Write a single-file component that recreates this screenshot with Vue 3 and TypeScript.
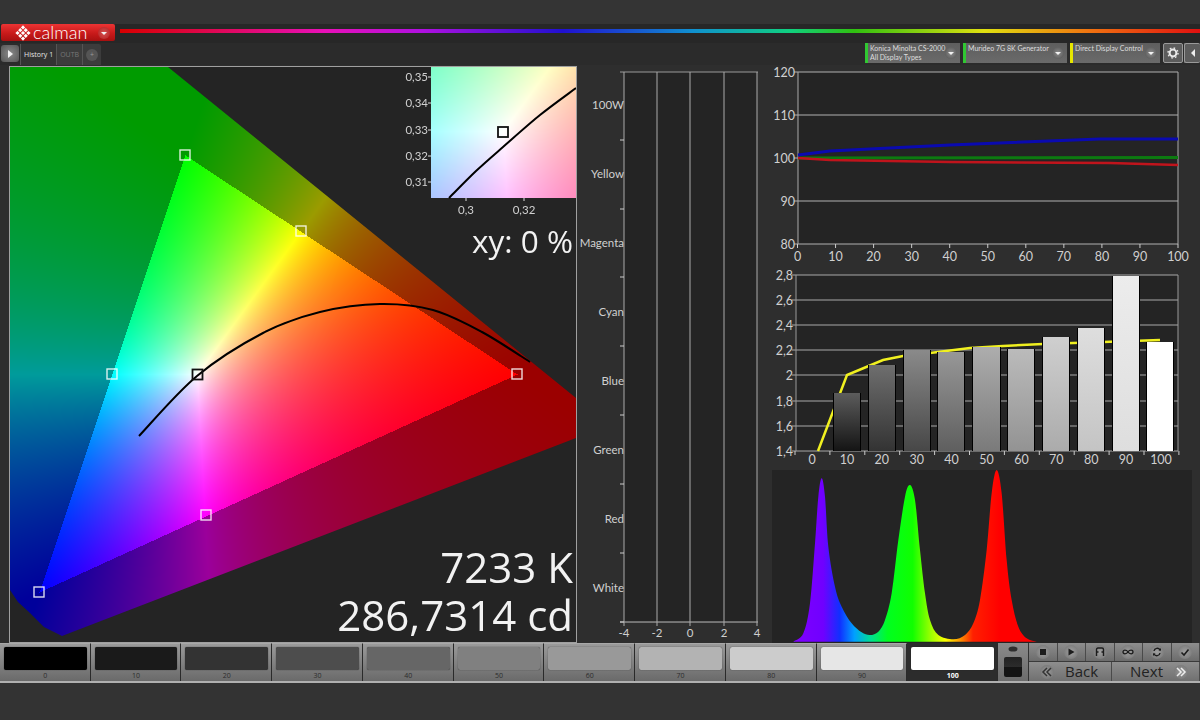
<script setup lang="ts">
import { onMounted, ref } from 'vue'

type Pt = [number, number]

const cieCanvas = ref<HTMLCanvasElement | null>(null)
const insetCanvas = ref<HTMLCanvasElement | null>(null)

// chromaticity triangle, page coordinates
const G: Pt = [185, 155]
const R: Pt = [517, 374]
const B: Pt = [39, 592]
const W: Pt = [197, 374]
const locus: Pt[] = [
  [10, 67], [168, 67], [576, 398], [576, 438], [62, 636], [44, 627], [30, 613], [18, 602], [10, 590],
]

function smooth(pts: Pt[]): string {
  let d = `M${pts[0][0]},${pts[0][1]}`
  for (let i = 0; i < pts.length - 1; i++) {
    const p0 = pts[Math.max(i - 1, 0)]
    const p1 = pts[i]
    const p2 = pts[i + 1]
    const p3 = pts[Math.min(i + 2, pts.length - 1)]
    const c1x = p1[0] + (p2[0] - p0[0]) / 6
    const c1y = p1[1] + (p2[1] - p0[1]) / 6
    const c2x = p2[0] - (p3[0] - p1[0]) / 6
    const c2y = p2[1] - (p3[1] - p1[1]) / 6
    d += ` C${c1x.toFixed(1)},${c1y.toFixed(1)} ${c2x.toFixed(1)},${c2y.toFixed(1)} ${p2[0]},${p2[1]}`
  }
  return d
}

const planck = smooth([
  [139, 436], [197, 376], [263, 333], [320, 312], [380, 304], [433, 310], [482, 332], [530, 362],
])
const insetPlanck = smooth([[449, 198], [476, 171], [503, 147], [540, 115], [576, 88]])
const primaries: Pt[] = [G, [301, 231], [112, 374], R, [206, 515], B]

const insetLeft = [
  { t: '0,35', y: 77 }, { t: '0,34', y: 103 }, { t: '0,33', y: 130 }, { t: '0,32', y: 156 }, { t: '0,31', y: 182 },
]
const insetBottom = [{ t: '0,3', x: 466 }, { t: '0,32', x: 524 }]

// delta chart
const deltaRows = [
  { t: '100W', y: 105 }, { t: 'Yellow', y: 174 }, { t: 'Magenta', y: 243 }, { t: 'Cyan', y: 312 },
  { t: 'Blue', y: 381 }, { t: 'Green', y: 450 }, { t: 'Red', y: 519 }, { t: 'White', y: 588 },
]
const deltaTicks = [140, 209, 277, 346, 415, 484, 553, 622]
const deltaCols = [{ t: '-4', x: 624 }, { t: '-2', x: 657 }, { t: '0', x: 690 }, { t: '2', x: 724 }, { t: '4', x: 757 }]

// rgb balance
const rgbGrid = [{ t: '120', y: 72 }, { t: '110', y: 115 }, { t: '100', y: 158 }, { t: '90', y: 201 }, { t: '80', y: 244 }]
const rgbCols = Array.from({ length: 11 }, (_, i) => ({ t: String(i * 10), x: 797.5 + i * 38.05 }))
const rgbBlue = 'M798,155 L830,151 L950,145 L1100,139 L1178,139'
const rgbGreen = 'M798,158 L1178,157.5'
const rgbRed = 'M798,158 L830,160 L950,162 L1110,163 L1178,165'

// gamma
const gammaGrid = [
  { t: '2,8', y: 275 }, { t: '2,6', y: 300 }, { t: '2,4', y: 325 }, { t: '2,2', y: 350 },
  { t: '2', y: 375 }, { t: '1,8', y: 401 }, { t: '1,6', y: 426 }, { t: '1,4', y: 451 },
]
const gammaCols = ['0', '10', '20', '30', '40', '50', '60', '70', '80', '90', '100'].map((t, i) => ({
  t,
  x: 812 + i * 34.9,
}))
const gammaTicks = Array.from({ length: 12 }, (_, i) => 795 + i * 34.9)
const gammaLine: Pt[] = [
  [818, 451], [847, 375], [883, 360], [903, 356], [930, 353], [970, 348], [1003, 346], [1043, 344], [1103, 342], [1160, 340],
]
const gammaPath = gammaLine.map((p, i) => `${i ? 'L' : 'M'}${p[0]},${p[1]}`).join(' ')
const gammaBars = [
  { x: 834, w: 26, top: 393, c1: '#5c5c5c', c2: '#141414' },
  { x: 869, w: 26, top: 365, c1: '#6e6e6e', c2: '#333333' },
  { x: 904, w: 26, top: 350, c1: '#8a8a8a', c2: '#474747' },
  { x: 938, w: 26, top: 352, c1: '#979797', c2: '#5f5f5f' },
  { x: 973, w: 27, top: 347, c1: '#adadad', c2: '#7a7a7a' },
  { x: 1008, w: 26, top: 349, c1: '#bbbbbb', c2: '#939393' },
  { x: 1043, w: 26, top: 337, c1: '#cfcfcf', c2: '#ababab' },
  { x: 1078, w: 26, top: 328, c1: '#dedede', c2: '#c4c4c4' },
  { x: 1113, w: 26, top: 276, c1: '#ececec', c2: '#dedede' },
  { x: 1147, w: 26, top: 342, c1: '#ffffff', c2: '#ffffff' },
]

// spectrum, traced outline
const spectrumRaw: Pt[] = [
  [70, 545], [100, 520], [120, 430], [135, 250], [145, 110], [155, 55], [165, 110], [175, 260], [195, 380], [215, 440],
  [245, 490], [275, 517], [300, 525], [325, 515], [345, 480], [365, 400], [385, 240], [405, 110], [420, 75], [435, 120],
  [450, 270], [465, 400], [480, 480], [505, 525], [550, 538], [585, 525], [610, 490], [630, 420], [650, 270], [665, 100],
  [680, 30], [695, 100], [710, 300], [725, 420], [745, 500], [770, 535], [800, 545],
]
const spectrumPath =
  smooth(spectrumRaw.map((p) => [770 + p[0] / 3, 460 + p[1] / 3] as Pt)) + ' Z'
const spectrumStops = [
  { o: 0, c: '#8000ff' }, { o: 0.15, c: '#7000ff' }, { o: 0.23, c: '#1030ff' }, { o: 0.3, c: '#00a0ff' },
  { o: 0.38, c: '#00e090' }, { o: 0.46, c: '#00ff20' }, { o: 0.58, c: '#10ff00' }, { o: 0.67, c: '#a0ff00' },
  { o: 0.74, c: '#ffff00' }, { o: 0.81, c: '#ff9000' }, { o: 0.87, c: '#ff2000' }, { o: 1, c: '#ff0000' },
]

const swatches = [
  { label: '0', c: '#000000' }, { label: '10', c: '#1a1a1a' }, { label: '20', c: '#333333' }, { label: '30', c: '#4d4d4d' },
  { label: '40', c: '#666666' }, { label: '50', c: '#808080' }, { label: '60', c: '#999999' }, { label: '70', c: '#b3b3b3' },
  { label: '80', c: '#cccccc' }, { label: '90', c: '#e6e6e6' }, { label: '100', c: '#ffffff' },
]
const sources = [
  { name: 'Konica Minolta CS-2000', sub: 'All Display Types', color: '#30c832', w: 95 },
  { name: 'Murideo 7G 8K Generator', sub: '', color: '#30c832', w: 104 },
  { name: 'Direct Display Control', sub: '', color: '#e6e600', w: 90 },
]

function bary(x: number, y: number): [number, number, number] {
  const d = (G[1] - B[1]) * (R[0] - B[0]) + (B[0] - G[0]) * (R[1] - B[1])
  const r = ((G[1] - B[1]) * (x - B[0]) + (B[0] - G[0]) * (y - B[1])) / d
  const g = ((B[1] - R[1]) * (x - B[0]) + (R[0] - B[0]) * (y - B[1])) / d
  return [r, g, 1 - r - g]
}

const w0 = bary(W[0], W[1])

function chroma(x: number, y: number): [number, number, number] {
  const [a, b, c] = bary(x, y)
  const inside = a >= 0 && b >= 0 && c >= 0
  const r = Math.max(a, 0) / w0[0]
  const g = Math.max(b, 0) / w0[1]
  const bl = Math.max(c, 0) / w0[2]
  const m = Math.max(r, g, bl) || 1
  const dim = inside ? 255 : 155
  return [(r / m) * dim, (g / m) * dim, (bl / m) * dim]
}

function paint(canvas: HTMLCanvasElement, fn: (x: number, y: number) => [number, number, number]) {
  const ctx = canvas.getContext('2d')
  if (!ctx) return
  const img = ctx.createImageData(canvas.width, canvas.height)
  for (let y = 0; y < canvas.height; y++) {
    for (let x = 0; x < canvas.width; x++) {
      const [r, g, b] = fn(x, y)
      const i = (y * canvas.width + x) * 4
      img.data[i] = r
      img.data[i + 1] = g
      img.data[i + 2] = b
      img.data[i + 3] = 255
    }
  }
  ctx.putImageData(img, 0, 0)
}

onMounted(() => {
  const cie = cieCanvas.value
  const inset = insetCanvas.value
  if (cie) {
    const buffer = document.createElement('canvas')
    buffer.width = cie.width
    buffer.height = cie.height
    paint(buffer, (x, y) => chroma(x + 10, y + 67))
    const ctx = cie.getContext('2d')
    if (ctx) {
      ctx.beginPath()
      locus.forEach((p, i) => (i ? ctx.lineTo(p[0] - 10, p[1] - 67) : ctx.moveTo(p[0] - 10, p[1] - 67)))
      ctx.closePath()
      ctx.clip()
      ctx.drawImage(buffer, 0, 0)
    }
  }
  if (inset) {
    // the inset is the area around the white point, enlarged
    const k = 0.35
    paint(inset, (x, y) => chroma(W[0] + (x + 431 - 503) * k, W[1] + (y + 67 - 131) * k))
  }
})
</script>

<template>
  <div class="page">
    <div class="top-band"></div>

    <div class="title-bar">
      <div class="logo">
        <svg class="logo__mark" viewBox="0 0 16 16" width="16" height="16">
          <g fill="#fff" transform="rotate(45 8 8)">
            <rect v-for="n in 9" :key="n" :x="2.6 + ((n - 1) % 3) * 3.9" :y="2.6 + Math.floor((n - 1) / 3) * 3.9" width="3" height="3" />
          </g>
        </svg>
        <span class="logo__text">calman</span>
        <span class="drop drop--red"></span>
      </div>
      <div class="rainbow"></div>
    </div>

    <div class="tool-bar">
      <div class="tabs">
        <button class="play"><span class="play__arrow"></span></button>
        <div class="tab-group">
          <span class="tab tab--on">History 1</span>
          <span class="tab">OUTB</span>
          <span class="tab tab--add"><span class="tab__plus">+</span></span>
        </div>
      </div>
      <div class="sources">
        <div
          v-for="s in sources"
          :key="s.name"
          class="source"
          :style="{ width: s.w + 'px', borderLeftColor: s.color }"
        >
          <div class="source__text">
            <div>{{ s.name }}</div>
            <div>{{ s.sub }}</div>
          </div>
          <span class="drop"></span>
        </div>
        <button class="square square--gear">
          <svg viewBox="0 0 12 12" width="12" height="12">
            <circle cx="6" cy="6" r="3.4" fill="none" stroke="#e8e8e8" stroke-width="2" />
            <circle cx="6" cy="6" r="5" fill="none" stroke="#e8e8e8" stroke-width="1.4" stroke-dasharray="1.6 2.33" />
          </svg>
        </button>
        <button class="square square--back"><span class="square__arrow"></span></button>
      </div>
    </div>

    <div class="main">
      <div class="cie">
        <canvas ref="cieCanvas" width="566" height="575"></canvas>
        <canvas ref="insetCanvas" class="cie__inset" width="145" height="131"></canvas>
        <svg class="cie__marks" viewBox="10 67 566 575" width="566" height="575">
          <path :d="planck" fill="none" stroke="#000" stroke-width="2" />
          <rect
            v-for="(p, i) in primaries"
            :key="i"
            :x="p[0] - 5"
            :y="p[1] - 5"
            width="10"
            height="10"
            fill="none"
            stroke="#fff"
            stroke-opacity="0.85"
            stroke-width="1.4"
          />
          <rect x="192.5" y="369.5" width="10" height="10" fill="none" stroke="#111" stroke-width="1.8" />

          <path :d="insetPlanck" fill="none" stroke="#000" stroke-width="2" />
          <rect x="498" y="127" width="10" height="10" fill="none" stroke="#111" stroke-width="1.8" />

          <g v-for="l in insetLeft" :key="l.t">
            <text class="axis" x="428" :y="l.y + 4" text-anchor="end">{{ l.t }}</text>
            <line x1="428" x2="431" :y1="l.y" :y2="l.y" stroke="#ddd" />
          </g>
          <g v-for="l in insetBottom" :key="l.t">
            <line :x1="l.x" :x2="l.x" y1="198" y2="201" stroke="#ddd" />
            <text class="axis" :x="l.x" y="214" text-anchor="middle">{{ l.t }}</text>
          </g>
        </svg>
        <div class="xy">xy: 0 %</div>
        <div class="readout">
          <div>7233 K</div>
          <div>286,7314 cd</div>
        </div>
      </div>

      <svg class="delta" viewBox="577 65 195 578" width="195" height="578">
        <rect x="624" y="72" width="133" height="550" fill="#242424" />
        <line x1="620" x2="758" y1="72" y2="72" stroke="#999" />
        <line x1="620" x2="758" y1="622" y2="622" stroke="#bbb" />
        <line v-for="c in deltaCols" :key="c.t" :x1="c.x" :x2="c.x" y1="72" y2="626" stroke="#aaa" />
        <line v-for="y in deltaTicks" :key="y" x1="620" x2="624" :y1="y" :y2="y" stroke="#ccc" />
        <text v-for="r in deltaRows" :key="r.t" class="axis" x="624" :y="r.y + 4" text-anchor="end">{{ r.t }}</text>
        <text v-for="c in deltaCols" :key="c.t" class="axis" :x="c.x" y="637" text-anchor="middle">{{ c.t }}</text>
      </svg>

      <div class="charts">
        <svg viewBox="772 65 428 205" width="428" height="205">
          <rect x="798" y="72" width="380" height="172" fill="#242424" />
          <g v-for="g in rgbGrid" :key="g.t">
            <line x1="794" x2="1178" :y1="g.y" :y2="g.y" stroke="#b0b0b0" />
            <text class="axis axis--lg" x="795" :y="g.y + 5" text-anchor="end">{{ g.t }}</text>
          </g>
          <line x1="798" x2="798" y1="72" y2="244" stroke="#aaa" />
          <line x1="1178" x2="1178" y1="72" y2="244" stroke="#aaa" />
          <g v-for="c in rgbCols" :key="c.t">
            <line :x1="c.x" :x2="c.x" y1="244" y2="248" stroke="#ccc" />
            <text class="axis axis--lg" :x="c.x" y="260.5" text-anchor="middle">{{ c.t }}</text>
          </g>
          <path :d="rgbGreen" fill="none" stroke="#0c7a10" stroke-width="3" />
          <path :d="rgbRed" fill="none" stroke="#c0141c" stroke-width="2.5" />
          <path :d="rgbBlue" fill="none" stroke="#0a0ab0" stroke-width="3" />
        </svg>

        <svg viewBox="772 270 428 200" width="428" height="200">
          <defs>
            <linearGradient v-for="(b, i) in gammaBars" :id="'bar' + i" :key="i" x1="0" y1="0" x2="0" y2="1">
              <stop offset="0" :stop-color="b.c1" />
              <stop offset="1" :stop-color="b.c2" />
            </linearGradient>
          </defs>
          <rect x="796" y="275" width="382" height="176" fill="#242424" />
          <g v-for="g in gammaGrid" :key="g.t">
            <line x1="792" x2="1178" :y1="g.y" :y2="g.y" stroke="#a8a8a8" />
            <text class="axis axis--lg" x="793" :y="g.y + 5" text-anchor="end">{{ g.t }}</text>
          </g>
          <line x1="796" x2="796" y1="275" y2="451" stroke="#999" />
          <line x1="1178" x2="1178" y1="275" y2="451" stroke="#999" />
          <line v-for="x in gammaTicks" :key="x" :x1="x" :x2="x" y1="451" y2="455" stroke="#ccc" />
          <text v-for="c in gammaCols" :key="c.t" class="axis axis--lg" :x="c.x" y="464" text-anchor="middle">{{ c.t }}</text>
          <path :d="gammaPath" fill="none" stroke="#f0f020" stroke-width="2.5" />
          <g v-for="(b, i) in gammaBars" :key="i">
            <rect :x="b.x - 1" :y="b.top" :width="b.w + 2" :height="451 - b.top" fill="#000" />
            <rect :x="b.x" :y="b.top" :width="b.w" :height="451 - b.top" :fill="'url(#bar' + i + ')'" />
          </g>
        </svg>

        <svg class="spectrum" viewBox="772 470 428 173" width="428" height="173">
          <defs>
            <linearGradient id="spec" gradientUnits="userSpaceOnUse" x1="792" y1="0" x2="1000" y2="0">
              <stop v-for="s in spectrumStops" :key="s.o" :offset="s.o" :stop-color="s.c" />
            </linearGradient>
          </defs>
          <rect x="772" y="470" width="420" height="173" fill="#242424" />
          <path :d="spectrumPath" fill="url(#spec)" />
        </svg>
      </div>
    </div>

    <div class="bottom">
      <div class="thumbs">
        <div
          v-for="s in swatches"
          :key="s.label"
          class="thumb"
          :class="{ 'thumb--on': s.label === '100' }"
        >
          <div class="thumb__face" :style="{ background: s.c }"></div>
          <div class="thumb__label">{{ s.label }}</div>
        </div>
      </div>
      <div class="mini">
        <svg viewBox="0 0 10 6" width="10" height="6"><ellipse cx="5" cy="3" rx="4.5" ry="2.6" fill="#2e2e2e" /></svg>
        <div class="mini__face"></div>
      </div>
      <div class="controls">
        <div class="controls__top">
          <button class="ctl">
            <span class="ctl__ball"><svg viewBox="0 0 10 10" width="10" height="10"><rect x="2" y="2" width="6" height="6" fill="#1c1c1c" /></svg></span>
          </button>
          <button class="ctl">
            <span class="ctl__ball"><svg viewBox="0 0 10 10" width="10" height="10"><path d="M2.5,1.5 L8.5,5 L2.5,8.5 Z" fill="#1c1c1c" /></svg></span>
          </button>
          <button class="ctl">
            <span class="ctl__ball"><svg viewBox="0 0 10 10" width="10" height="10"><path d="M1.5,9 V2.5 Q1.5,1 3,1 H7 Q8.5,1 8.5,2.5 V9 M1.5,5 H3.5 M6.5,5 H8.5" fill="none" stroke="#1c1c1c" stroke-width="1.4" /></svg></span>
          </button>
          <button class="ctl">
            <span class="ctl__ball"><svg viewBox="0 0 12 10" width="12" height="10"><path d="M6,5 C4.5,2.6 1,2.6 1,5 C1,7.4 4.5,7.4 6,5 C7.5,2.6 11,2.6 11,5 C11,7.4 7.5,7.4 6,5 Z" fill="none" stroke="#1c1c1c" stroke-width="1.3" /></svg></span>
          </button>
          <button class="ctl">
            <span class="ctl__ball"><svg viewBox="0 0 10 10" width="10" height="10"><path d="M2,4 A3.2,3.2 0 0 1 8,3 M8,6 A3.2,3.2 0 0 1 2,7" fill="none" stroke="#1c1c1c" stroke-width="1.4" /><path d="M6.5,3.4 L9,3.8 L9,1 Z M3.5,6.6 L1,6.2 L1,9 Z" fill="#1c1c1c" /></svg></span>
          </button>
          <button class="ctl">
            <span class="ctl__ball"><svg viewBox="0 0 10 10" width="10" height="10"><path d="M1.5,5.5 L4,8 L8.5,2.5" fill="none" stroke="#1c1c1c" stroke-width="1.6" /></svg></span>
          </button>
        </div>
        <div class="controls__bottom">
          <button class="nav">
            <span class="ctl__ball ctl__ball--nav"><svg viewBox="0 0 12 10" width="12" height="10"><path d="M6,1 L2,5 L6,9 M10,1 L6,5 L10,9" fill="none" stroke="#333" stroke-width="1.5" /></svg></span>
            <span class="nav__text">Back</span>
          </button>
          <button class="nav nav--next">
            <span class="nav__text">Next</span>
            <span class="ctl__ball ctl__ball--nav"><svg viewBox="0 0 12 10" width="12" height="10"><path d="M2,1 L6,5 L2,9 M6,1 L10,5 L6,9" fill="none" stroke="#eee" stroke-width="1.5" /></svg></span>
          </button>
        </div>
      </div>
    </div>
  </div>
</template>

<style>
html,
body {
  margin: 0;
  background: #333333;
}
</style>

<style scoped>
.page {
  width: 1200px;
  height: 720px;
  display: flex;
  flex-direction: column;
  overflow: hidden;
  background: #333333;
  font-family: 'Open Sans', 'Liberation Sans', sans-serif;
}

button {
  padding: 0;
  border: none;
  font-family: inherit;
}

.top-band {
  height: 24px;
  background: #343434;
}

.title-bar {
  height: 19px;
  display: flex;
  align-items: flex-start;
  background: #272727;
}

.logo {
  width: 114px;
  height: 17px;
  margin-left: 1px;
  display: flex;
  align-items: center;
  box-sizing: border-box;
  padding-left: 14px;
  border-radius: 2px;
  background: linear-gradient(#ec3434, #c81a1a 55%, #a81010);
}

.logo__text {
  margin-left: 2px;
  flex: 1;
  font-family: Lato, 'Open Sans', sans-serif;
  font-size: 18px;
  font-weight: 300;
  line-height: 17px;
  color: #ffffff;
}

.drop {
  flex: none;
  position: relative;
  width: 12px;
  height: 12px;
  border-radius: 50%;
  background: radial-gradient(#8c8c8c, #4e4e4e);
}

.drop::after {
  content: '';
  position: absolute;
  left: 3px;
  top: 5px;
  border-left: 3px solid transparent;
  border-right: 3px solid transparent;
  border-top: 3px solid #f2f2f2;
}

.drop--red {
  margin-right: 5px;
  background: radial-gradient(#d85050, #b02020);
}

.rainbow {
  flex: 1;
  height: 4px;
  margin: 5px 0 0 5px;
  background: linear-gradient(
    to right,
    #d80000 0%,
    #e810b8 19%,
    #b010e0 28%,
    #2010d0 41%,
    #1090d0 53%,
    #10d080 62%,
    #30c010 68%,
    #e0e010 80%,
    #f07010 90%,
    #e01010 100%
  );
}

.tool-bar {
  height: 22px;
  display: flex;
  justify-content: space-between;
  background: #2b2b2b;
}

.tabs {
  display: flex;
  align-items: flex-start;
  padding-left: 1px;
}

.play {
  width: 18px;
  height: 17px;
  margin-top: 2px;
  display: flex;
  align-items: center;
  justify-content: center;
  border-radius: 3px;
  background: radial-gradient(#8a8a8a, #555555);
}

.play__arrow {
  border-left: 5px solid #f0f0f0;
  border-top: 4px solid transparent;
  border-bottom: 4px solid transparent;
}

.tab-group {
  height: 21px;
  margin: 1px 0 0 1px;
  display: flex;
  background: #3c3c3c;
  border-radius: 2px 2px 0 0;
}

.tab {
  display: flex;
  align-items: center;
  padding: 0 3px;
  border-left: 1px solid #555555;
  font-size: 7px;
  color: #777777;
}

.tab--on {
  color: #e4e4e4;
  background: #333333;
}

.tab--add {
  padding: 0 3px;
}

.tab__plus {
  width: 12px;
  height: 12px;
  line-height: 12px;
  text-align: center;
  border-radius: 50%;
  background: #555555;
  color: #999999;
}

.sources {
  display: flex;
  gap: 3px;
}

.source {
  box-sizing: border-box;
  height: 20px;
  display: flex;
  align-items: center;
  gap: 2px;
  border-left: 3px solid #30c832;
  padding: 0 3px 0 2px;
  background: linear-gradient(#5e5e5e, #6a6a6a);
}

.source__text {
  flex: 1;
  min-width: 0;
  align-self: flex-start;
  font-family: Lato, 'Open Sans', sans-serif;
  font-size: 7px;
  line-height: 9px;
  color: #dddddd;
  white-space: nowrap;
  padding-top: 1px;
}

.square {
  width: 20px;
  height: 20px;
  display: flex;
  align-items: center;
  justify-content: center;
  border: 1px solid #9a9a9a;
  box-sizing: border-box;
  border-radius: 2px;
  background: #5c5c5c;
}

.square--back {
  margin-left: -2px;
  width: 16px;
  border-right: none;
}

.square__arrow {
  border-right: 4px solid #eeeeee;
  border-top: 4px solid transparent;
  border-bottom: 4px solid transparent;
}

.main {
  height: 578px;
  display: flex;
  background: #2e2e2e;
}

.cie {
  position: relative;
  flex: none;
  width: 566px;
  height: 575px;
  margin: 1px 0 0 9px;
  border: 1px solid #a0a0a0;
  background: #242424;
}

.cie canvas {
  display: block;
}

.cie .cie__inset {
  position: absolute;
  top: 0;
  right: 0;
}

.cie__marks {
  position: absolute;
  top: 0;
  left: 0;
}

.xy {
  position: absolute;
  top: 152px;
  right: 3px;
  font-size: 31.5px;
  line-height: 44px;
  color: #f2f2f2;
}

.readout {
  position: absolute;
  right: 3px;
  bottom: 3px;
  text-align: right;
  font-size: 42px;
  line-height: 48px;
  color: #f2f2f2;
}

.axis {
  font-family: Lato, 'Open Sans', sans-serif;
  font-size: 11.5px;
  fill: #d0d0d0;
}

.axis--lg {
  font-size: 12.5px;
}

.delta {
  flex: none;
  display: block;
}

.charts {
  display: flex;
  flex-direction: column;
}

.charts svg {
  display: block;
}

.bottom {
  height: 40px;
  display: flex;
  box-sizing: border-box;
  border-bottom: 2px solid #b0b0b0;
  background: #707070;
}

.thumbs {
  flex: none;
  width: 998px;
  display: flex;
}

.thumb {
  flex: 1;
  box-sizing: border-box;
  display: flex;
  flex-direction: column;
  padding: 3px 3px 0 4px;
  border-top: 1px solid #a8a8a8;
  border-right: 1px solid #2a2a2a;
  background: linear-gradient(#9a9a9a, #6a6a6a);
}

.thumb__face {
  height: 23px;
  border-radius: 2px;
  box-shadow: 0 0 1px #222222;
}

.thumb__label {
  font-size: 7px;
  line-height: 11px;
  text-align: center;
  color: #2c2c2c;
}

.thumb--on {
  background: #2c2c2c;
  border-top-color: #2c2c2c;
}

.thumb--on .thumb__label {
  color: #ffffff;
  font-weight: 700;
}

.mini {
  flex: none;
  width: 30px;
  display: flex;
  flex-direction: column;
  align-items: center;
  gap: 5px;
  padding-top: 3px;
  box-sizing: border-box;
  background: linear-gradient(#8a8a8a, #6c6c6c);
}

.mini__face {
  width: 18px;
  height: 20px;
  border-radius: 2px;
  background: linear-gradient(#222222, #2c2c2c 50%, #141414 50%);
}

.controls {
  flex: 1;
  display: flex;
  flex-direction: column;
  border-left: 1px solid #333333;
}

.controls__top,
.controls__bottom {
  display: flex;
}

.controls__top {
  height: 19px;
  border-bottom: 1px solid #3a3a3a;
}

.controls__bottom {
  flex: 1;
}

.ctl {
  flex: 1;
  display: flex;
  align-items: center;
  justify-content: center;
  border-right: 1px solid #4a4a4a;
  background: linear-gradient(#8e8e8e, #6c6c6c);
}

.ctl__ball {
  width: 14px;
  height: 14px;
  display: flex;
  align-items: center;
  justify-content: center;
  border-radius: 50%;
  background: radial-gradient(#a0a0a0, #707070);
}

.ctl__ball--nav {
  flex: none;
  background: radial-gradient(#9a9a9a, #6e6e6e);
}

.nav {
  flex: 1;
  display: flex;
  align-items: center;
  gap: 11px;
  padding: 0 6px 0 11px;
  border-right: 1px solid #4a4a4a;
  background: linear-gradient(#8e8e8e, #707070);
}

.nav--next {
  justify-content: flex-end;
  padding-right: 11px;
}

.nav__text {
  font-size: 15px;
  line-height: 19px;
  color: #222222;
}
</style>
